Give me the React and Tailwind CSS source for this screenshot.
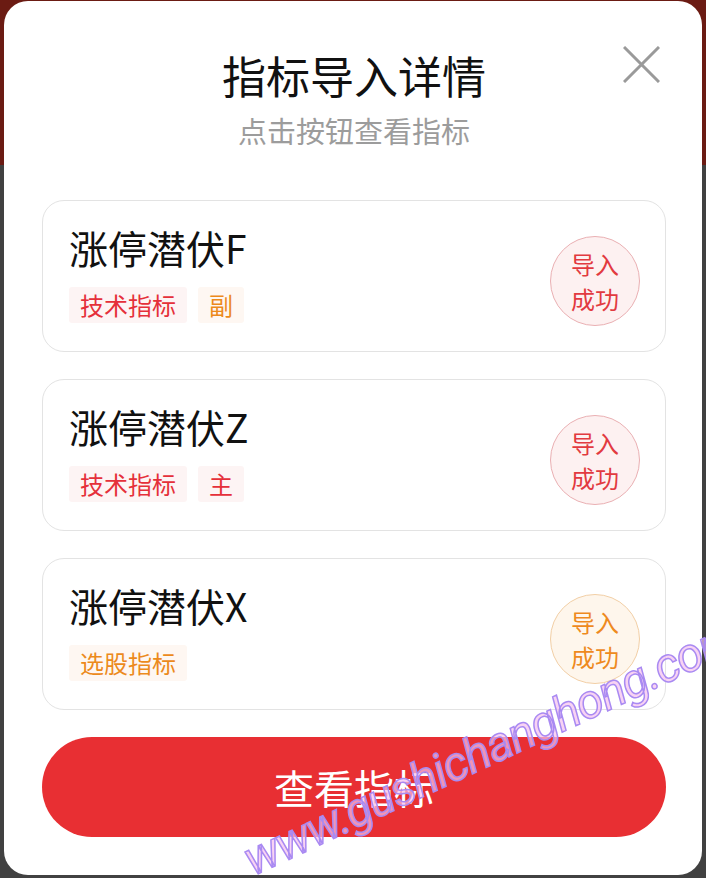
import React from "react";

const cjk = "font-['Noto_Sans_CJK_SC','Noto_Sans',sans-serif]";

function Tag({ text, tone }) {
  const cls =
    tone === "red"
      ? "text-[#e5303a] bg-[#fdf4f4]"
      : "text-[#ec8a1c] bg-[#fef7f2]";
  return (
    <span className={`inline-flex h-[36px] items-center px-[11px] text-[24px] leading-none rounded-[3px] ${cls}`}>
      {text}
    </span>
  );
}

function Badge({ tone }) {
  const cls =
    tone === "red"
      ? "border-[#eab0b3] bg-[#fdf1f1] text-[#e23a40]"
      : "border-[#f2cfa6] bg-[#fef6ec] text-[#ee8a1e]";
  return (
    <div className={`mt-[10px] flex h-[90px] w-[90px] flex-col items-center justify-center rounded-full border ${cls}`}>
      <span className="text-[24px] leading-[35px]">导入</span>
      <span className="text-[24px] leading-[35px]">成功</span>
    </div>
  );
}

function Card({ title, tags, tone }) {
  return (
    <div className="flex h-[152px] items-center justify-between rounded-[22px] border border-[#e3e3e3] pl-[26px] pr-[25px]">
      <div className="flex flex-col self-start pt-[22px]">
        <div className="text-[39px] leading-[48px] text-[#111]">{title}</div>
        <div className="mt-[16px] flex gap-[11px]">
          {tags.map((t) => (
            <Tag key={t.text} text={t.text} tone={t.tone} />
          ))}
        </div>
      </div>
      <Badge tone={tone} />
    </div>
  );
}

export default function App() {
  return (
    <div className={`relative h-[878px] w-[706px] overflow-hidden bg-[linear-gradient(to_bottom,#6b1b13_165px,#414141_165px)] px-[4px] pt-[1px] ${cjk}`}>
      <div className="relative flex h-[874px] flex-col rounded-[24px] bg-white pl-[38px] pr-[36px] pt-[46px]">
        <button className="absolute right-[42px] top-[45px] h-[37px] w-[37px]">
          <svg viewBox="0 0 37 37" className="h-full w-full" fill="none" stroke="#9a9a9a" strokeWidth="3">
            <path d="M1 1 L36 36 M36 1 L1 36" />
          </svg>
        </button>
        <div className="text-center text-[44px] leading-[56px] text-[#111]">指标导入详情</div>
        <div className="mt-[7px] text-center text-[29px] leading-[40px] text-[#9c9c9c]">点击按钮查看指标</div>
        <div className="mt-[50px] flex flex-col gap-[27px]">
          <Card
            title="涨停潜伏F"
            tone="red"
            tags={[
              { text: "技术指标", tone: "red" },
              { text: "副", tone: "orange" },
            ]}
          />
          <Card
            title="涨停潜伏Z"
            tone="red"
            tags={[
              { text: "技术指标", tone: "red" },
              { text: "主", tone: "red" },
            ]}
          />
          <Card
            title="涨停潜伏X"
            tone="orange"
            tags={[{ text: "选股指标", tone: "orange" }]}
          />
        </div>
        <button className="mt-[27px] flex h-[100px] items-center justify-center rounded-full bg-[#e82f33] text-[40px] text-white">
          查看指标
        </button>
      </div>
      <span className="pointer-events-none absolute left-[236px] top-[840px] origin-top-left -rotate-[25deg] whitespace-nowrap font-['Roboto',sans-serif] text-[48px] italic leading-none tracking-[-1px] text-[#f5c0ee]/70 [-webkit-text-stroke:1.5px_#a98af2]">
        www.gushichanghong.com
      </span>
    </div>
  );
}
